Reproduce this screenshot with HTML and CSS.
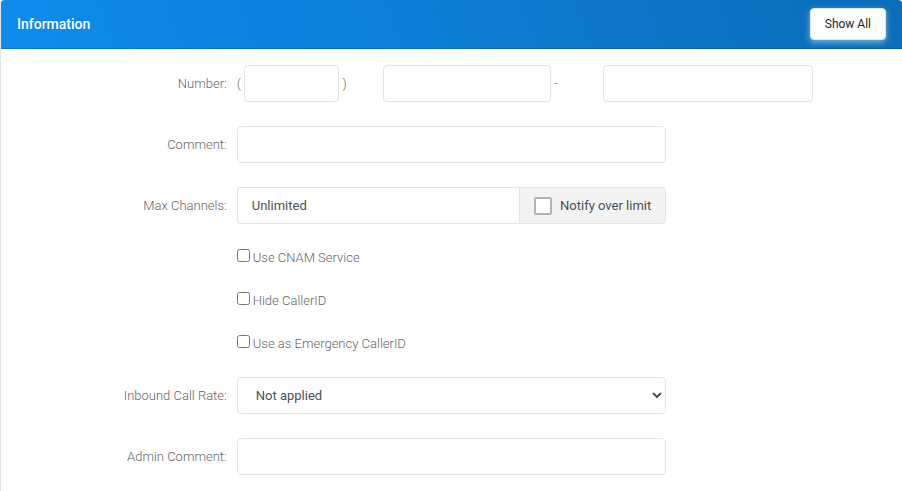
FILE: index.html
```
<!DOCTYPE html>
<html lang="en">
<head>
  <meta charset="UTF-8" />
  <title>Information</title>
  <link rel="stylesheet" href="styles.css">
</head>
<body>

  <section class="panel">
    <header class="panel-hdr">
      <h2>Information</h2>
      <button type="button" class="btn">Show All</button>
    </header>

    <form class="panel-content">

      <div class="form-row">
        <label class="form-label" for="area">Number:</label>
        <div class="col-2 number-part">
          <span>(</span>
          <input type="text" id="area" class="form-control area">
          <span>)</span>
        </div>
        <div class="col-3 number-part">
          <input type="text" id="prefix" class="form-control prefix" aria-label="Prefix">
          <span>-</span>
        </div>
        <div class="col-3">
          <input type="text" id="line" class="form-control" aria-label="Line number">
        </div>
      </div>

      <div class="form-row">
        <label class="form-label" for="comment">Comment:</label>
        <div class="col-6">
          <input type="text" id="comment" class="form-control">
        </div>
      </div>

      <div class="form-row">
        <label class="form-label" for="channels">Max Channels:</label>
        <div class="col-6 input-group">
          <input type="text" id="channels" class="form-control" value="Unlimited">
          <label class="input-group-text" for="notify">
            <input type="checkbox" id="notify" class="custom-check">
            Notify over limit
          </label>
        </div>
      </div>

      <div class="form-row">
        <div class="col-6 offset check">
          <input type="checkbox" id="cnam">
          <label for="cnam">Use CNAM Service</label>
        </div>
      </div>

      <div class="form-row">
        <div class="col-6 offset check">
          <input type="checkbox" id="hide">
          <label for="hide">Hide CallerID</label>
        </div>
      </div>

      <div class="form-row">
        <div class="col-6 offset check">
          <input type="checkbox" id="emergency">
          <label for="emergency">Use as Emergency CallerID</label>
        </div>
      </div>

      <div class="form-row">
        <label class="form-label" for="rate">Inbound Call Rate:</label>
        <div class="col-6">
          <select id="rate" class="form-control">
            <option>Not applied</option>
          </select>
        </div>
      </div>

      <div class="form-row">
        <label class="form-label" for="admin-comment">Admin Comment:</label>
        <div class="col-6">
          <input type="text" id="admin-comment" class="form-control">
        </div>
      </div>

    </form>
  </section>

</body>
</html>
```
FILE: styles.css
```
* {
  box-sizing: border-box;
}

body {
  margin: 0;
  font-family: Roboto, "Liberation Sans", sans-serif;
  font-size: 13px;
  font-weight: 300;
  line-height: 19px;
  color: #666;
  background-color: #fff;
}

input, select, button {
  margin: 0;
  font-family: inherit;
  font-size: inherit;
  line-height: inherit;
}

.panel {
  border: 1px solid #e5e5e5;
  border-width: 0 0 0 1px;
  border-radius: 4px 4px 0 0;
}

.panel-hdr {
  display: flex;
  align-items: center;
  justify-content: space-between;
  height: 49px;
  padding: 0 16px;
  color: #fff;
  background-color: #0e8cee;
  background-image: linear-gradient(250deg, #0a6db9, transparent);
  border-bottom: 1px solid rgba(0, 0, 0, 0.13);
  border-radius: 4px 4px 0 0;
}

.panel-hdr h2 {
  margin: 0;
  font-size: 14px;
  font-weight: 500;
}

.btn {
  padding: 6px 14px;
  font-size: 12px;
  font-weight: 400;
  line-height: 18px;
  color: #212529;
  background-color: #fff;
  border: 1px solid #e5e5e5;
  border-radius: 4px;
  box-shadow: 0 2px 6px rgba(255, 255, 255, 0.5);
}

.panel-content {
  padding: 16px;
}

.form-row {
  display: flex;
  margin: 0 -5px 24px;
}

.form-row:last-child {
  margin-bottom: 0;
}

.form-label,
.col-2,
.col-3,
.col-6 {
  flex: none;
  padding: 0 5px;
}

.form-label {
  width: 25%;
  padding-top: 9px;
  text-align: right;
}

.col-2 {
  width: calc(100% / 6);
}

.col-3 {
  width: 25%;
}

.col-6 {
  width: 50%;
}

.offset {
  margin-left: 25%;
}

.form-control {
  width: 100%;
  height: 37px;
  padding: 8px 14px;
  font-weight: 400;
  color: #495057;
  background-color: #fff;
  border: 1px solid #e5e5e5;
  border-radius: 4px;
}

.number-part {
  display: flex;
  align-items: center;
  gap: 3px;
}

.area {
  width: 70%;
}

.prefix {
  width: 80%;
}

.input-group {
  display: flex;
}

.input-group .form-control {
  flex: 1;
  min-width: 0;
  border-right: 0;
  border-radius: 4px 0 0 4px;
}

.input-group-text {
  display: flex;
  align-items: center;
  gap: 8px;
  padding: 0 14px;
  font-weight: 400;
  color: #495057;
  background-color: #f3f3f3;
  border: 1px solid #e5e5e5;
  border-radius: 0 4px 4px 0;
}

.custom-check {
  appearance: none;
  width: 18px;
  height: 18px;
  background-color: #fff;
  border: 2px solid #adb5bd;
  border-radius: 2px;
}

.custom-check:checked {
  background-color: #0e8cee;
  border-color: #0e8cee;
}

.check {
  display: flex;
  gap: 3px;
}

.check input {
  width: 13px;
  height: 13px;
  margin-top: 1px;
}
```
